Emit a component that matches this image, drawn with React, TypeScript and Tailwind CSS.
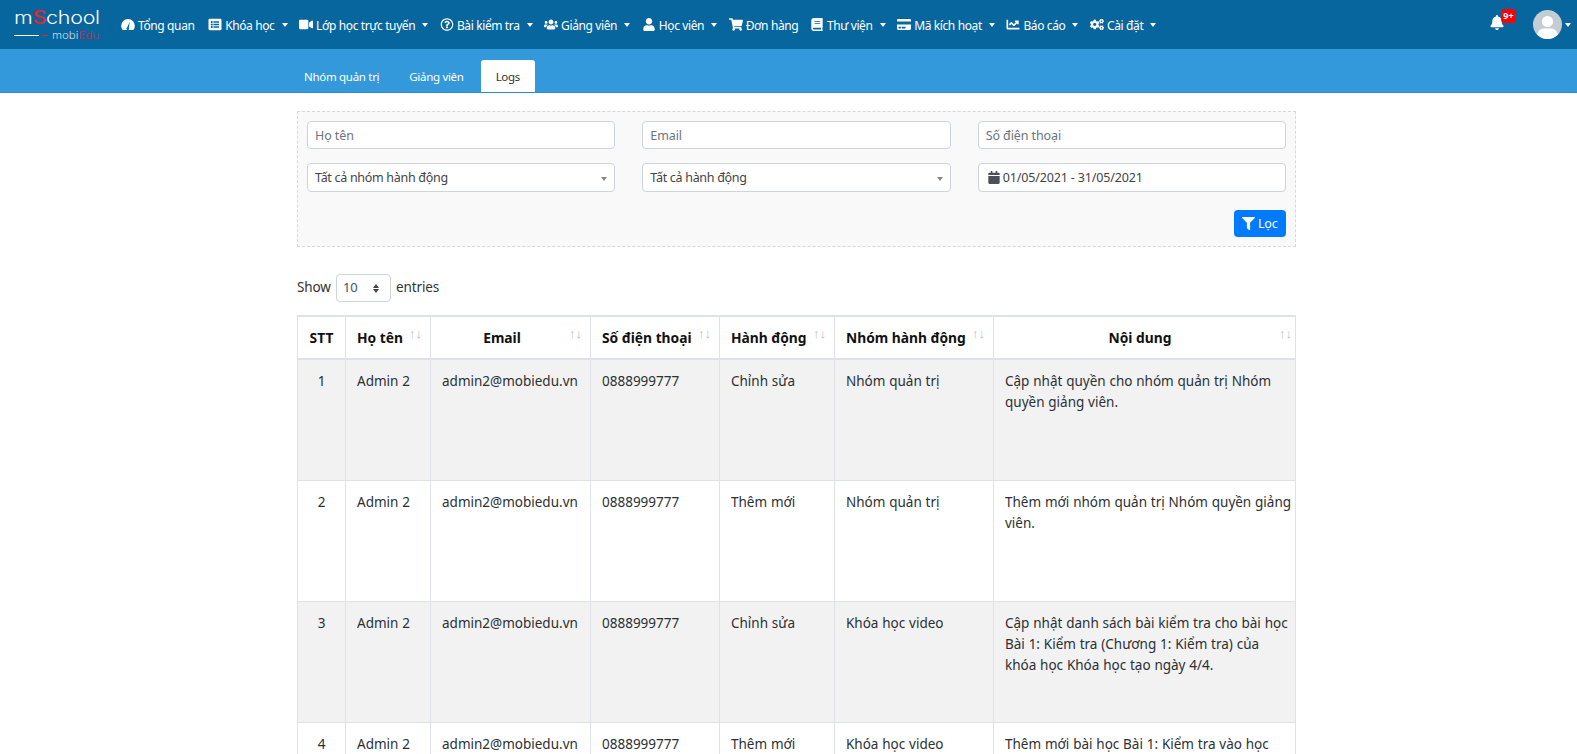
import React from "react";
import {
  FaListAlt, FaVideo, FaRegQuestionCircle, FaUsers, FaUser, FaShoppingCart, FaBook,
  FaCreditCard, FaChartLine, FaCogs, FaBell, FaFilter, FaCalendar,
} from "react-icons/fa";

function Gauge({ className }: { className?: string }) {
  return (
    <svg viewBox="0 0 14 13" className={className}>
      <path d="M7 1a6.8 6.8 0 0 0-6.8 6.8c0 1.6.5 3 1.4 4.2h10.8c.9-1.2 1.4-2.6 1.4-4.2A6.8 6.8 0 0 0 7 1z" fill="#fff" />
      <path d="M8.8 3.6 6.3 9.2a1.4 1.4 0 1 0 1.6.5z" fill="#08669f" />
    </svg>
  );
}

const nav = [
  { icon: Gauge, label: "Tổng quan", caret: false },
  { icon: FaListAlt, label: "Khóa học", caret: true },
  { icon: FaVideo, label: "Lớp học trực tuyến", caret: true },
  { icon: FaRegQuestionCircle, label: "Bài kiểm tra", caret: true },
  { icon: FaUsers, label: "Giảng viên", caret: true },
  { icon: FaUser, label: "Học viên", caret: true },
  { icon: FaShoppingCart, label: "Đơn hàng", caret: false },
  { icon: FaBook, label: "Thư viện", caret: true },
  { icon: FaCreditCard, label: "Mã kích hoạt", caret: true },
  { icon: FaChartLine, label: "Báo cáo", caret: true },
  { icon: FaCogs, label: "Cài đặt", caret: true },
];

const rows = [
  ["1", "Admin 2", "admin2@mobiedu.vn", "0888999777", "Chỉnh sửa", "Nhóm quản trị", "Cập nhật quyền cho nhóm quản trị Nhóm\nquyền giảng viên."],
  ["2", "Admin 2", "admin2@mobiedu.vn", "0888999777", "Thêm mới", "Nhóm quản trị", "Thêm mới nhóm quản trị Nhóm quyền giảng\nviên."],
  ["3", "Admin 2", "admin2@mobiedu.vn", "0888999777", "Chỉnh sửa", "Khóa học video", "Cập nhật danh sách bài kiểm tra cho bài học\nBài 1: Kiểm tra (Chương 1: Kiểm tra) của\nkhóa học Khóa học tạo ngày 4/4."],
  ["4", "Admin 2", "admin2@mobiedu.vn", "0888999777", "Thêm mới", "Khóa học video", "Thêm mới bài học Bài 1: Kiểm tra vào học"],
];

function Caret() {
  return <span className="ml-[7px] inline-block h-0 w-0 border-x-[3.5px] border-t-[4px] border-x-transparent border-t-white" />;
}

function Sort({ right = "right-[8px]" }: { right?: string }) {
  return (
    <span className={"absolute top-[9px] flex text-[13px] leading-[14px] font-normal text-[#b4bdc7] " + right}>
      <span>↑</span><span>↓</span>
    </span>
  );
}

function Dropdown({ label }: { label: string }) {
  return (
    <div className="flex h-[29px] items-center justify-between rounded border border-[#ced4da] bg-white pl-[7px] pr-[7px] text-[12.5px] tracking-[-0.3px] text-[#444]">
      <span className="pt-[2px]">{label}</span>
      <span className="mt-[2px] h-0 w-0 border-x-[3.5px] border-t-[4px] border-x-transparent border-t-[#888]" />
    </div>
  );
}

function Input({ label }: { label: string }) {
  return (
    <div className="flex h-[28px] items-center rounded border border-[#ced4da] bg-white px-[7px] pt-[3px] text-[12.5px] tracking-[-0.1px] text-[#6c757d]">
      {label}
    </div>
  );
}

const th = "relative border-x border-[#dee2e6] pl-[11px] pt-[1px] text-[13.8px] font-bold text-[#111]";
const td = "border-x border-[#dee2e6] px-[11px] pt-[11px] align-top text-[13.5px] leading-[21px] font-normal [word-spacing:0.3px] text-[#2b3035]";

export default function App() {
  return (
    <div className="h-[754px] overflow-hidden bg-white font-['Noto_Sans','Open_Sans',sans-serif]">
      <header className="flex h-[49px] items-center bg-[#08669f] text-white">
        <div className="ml-[14px] flex w-[93px] shrink-0 flex-col self-start pt-[8px]">
          <div className="h-[20px] origin-left scale-x-[1.19] font-['Inter',sans-serif] text-[18px] leading-[20px] font-light tracking-[-0.2px] whitespace-nowrap">
            m<span className="font-medium text-[#e8232a]">S</span>chool
          </div>
          <div className="mt-[2px] flex h-[10px] items-center">
            <span className="h-px w-[25px] bg-white" />
            <span className="ml-[3px] h-px w-[6px] bg-[#e8232a]" />
            <span className="ml-[4px] origin-left scale-x-[1.15] font-['Inter',sans-serif] text-[10px] leading-[10px] font-light text-[#cfd8e3]">
              mobi<span className="text-[#c92a3f]">Edu</span>
            </span>
          </div>
        </div>
        <nav className="ml-[14px] flex items-center gap-[11.6px] text-[12px] tracking-[-0.38px]">
          {nav.map((n) => (
            <div key={n.label} className="flex items-center whitespace-nowrap first:mr-[2px]">
              <n.icon className="mr-[3px] h-[13px] w-[14px]" />
              <span className="pt-[2px]">{n.label}</span>
              {n.caret && <Caret />}
            </div>
          ))}
        </nav>
        <div className="ml-auto mr-[6px] flex items-center">
          <div className="relative mr-[29px] -mt-[4px]">
            <FaBell className="h-[15px] w-[14px]" />
            <span className="absolute -right-[12px] -top-[6px] flex h-[14px] w-[15px] items-center justify-center rounded-[4px] bg-[#f00] text-[9px] leading-[14px] font-bold">9+</span>
          </div>
          <svg viewBox="0 0 29 29" className="h-[29px] w-[29px] rounded-full">
            <rect width="29" height="29" fill="#c4ccd4" />
            <circle cx="14.5" cy="11.5" r="5.6" fill="#fff" />
            <path d="M3.5 29c0-7 3-10 7-10.5h8c4 .5 7 3.5 7 10.5z" fill="#fff" />
          </svg>
          <span className="ml-[3px] h-0 w-0 border-x-[3.5px] border-t-[4px] border-x-transparent border-t-white" />
        </div>
      </header>

      <div className="flex h-[44px] items-end border-b border-[#2d8ccb] bg-[#3399db] pl-[289px] text-[11.5px] tracking-[-0.3px]">
        <div className="flex h-[32px] items-center px-[15px] pt-[2px] text-white">Nhóm quản trị</div>
        <div className="flex h-[32px] items-center px-[15px] pt-[2px] text-white">Giảng viên</div>
        <div className="ml-[2px] flex h-[32px] items-center rounded-t-[3px] bg-white px-[15px] pt-[2px] text-[#333]">Logs</div>
      </div>

      <main className="ml-[297px] w-[999px] pt-[18px]">
        <section className="h-[136px] border border-dashed border-[#d5d8dc] bg-[#f9f9f9] px-[9px] pt-[9px]">
          <div className="grid grid-cols-3 gap-x-[27px] gap-y-[14px]">
            <Input label="Họ tên" />
            <Input label="Email" />
            <Input label="Số điện thoại" />
            <Dropdown label="Tất cả nhóm hành động" />
            <Dropdown label="Tất cả hành động" />
            <div className="flex h-[29px] items-center rounded border border-[#ced4da] bg-white px-[9px] text-[12.5px] tracking-[-0.15px] text-[#444]">
              <FaCalendar className="mr-[3px] h-[13px] w-[12px] text-[#495057]" />
              <span className="pt-[2px]">01/05/2021 - 31/05/2021</span>
            </div>
          </div>
          <div className="mt-[18px] flex justify-end">
            <div className="flex h-[27px] w-[52px] items-center rounded bg-[#007bff] pl-2 text-[12.5px] tracking-[-0.2px] text-white">
              <FaFilter className="mr-[3px] h-[13px] w-[13px]" />
              <span className="pt-[2px]">Lọc</span>
            </div>
          </div>
        </section>

        <div className="mt-[27px] flex h-[28px] items-center text-[13.5px] tracking-[-0.1px] text-[#333]">
          <span className="pb-[2px]">Show</span>
          <div className="mx-[5px] flex h-[28px] w-[55px] items-center justify-between rounded border border-[#ced4da] bg-white pl-[6px] pr-[11px] text-[13px] text-[#495057]">
            10
            <span className="flex flex-col gap-px">
              <span className="h-0 w-0 border-x-[3.5px] border-b-[4px] border-x-transparent border-b-[#444]" />
              <span className="h-0 w-0 border-x-[3.5px] border-t-[4px] border-x-transparent border-t-[#444]" />
            </span>
          </div>
          <span className="pb-[2px]">entries</span>
        </div>

        <table className="mt-[13px] w-[999px] table-fixed border-collapse border-t-2 border-[#dee2e6]">
          <colgroup>
            <col className="w-[48px]" />
            <col className="w-[85px]" />
            <col className="w-[160px]" />
            <col className="w-[129px]" />
            <col className="w-[115px]" />
            <col className="w-[159px]" />
            <col />
          </colgroup>
          <thead>
            <tr className="h-[43px] border-b-2 border-[#dee2e6]">
              <th className={th + " pr-[11px] text-center"}>STT</th>
              <th className={th + " text-left"}>Họ tên<Sort /></th>
              <th className={th + " pr-[28px] text-center"}>Email<Sort /></th>
              <th className={th + " text-left"}>Số điện thoại<Sort /></th>
              <th className={th + " text-left"}>Hành động<Sort /></th>
              <th className={th + " text-left"}>Nhóm hành động<Sort /></th>
              <th className={th + " pr-[20px] text-center"}>Nội dung<Sort right="right-[3px]" /></th>
            </tr>
          </thead>
          <tbody>
            {rows.map((r, i) => (
              <tr key={r[0]} className={"h-[121px] border-b border-[#dee2e6] " + (i % 2 === 0 ? "bg-[#f2f2f2]" : "bg-white")}>
                {r.map((c, j) => (
                  <td key={j} className={td + (j === 0 ? " text-center" : "") + (j === 6 ? " whitespace-pre" : "")}>{c}</td>
                ))}
              </tr>
            ))}
          </tbody>
        </table>
      </main>
    </div>
  );
}
